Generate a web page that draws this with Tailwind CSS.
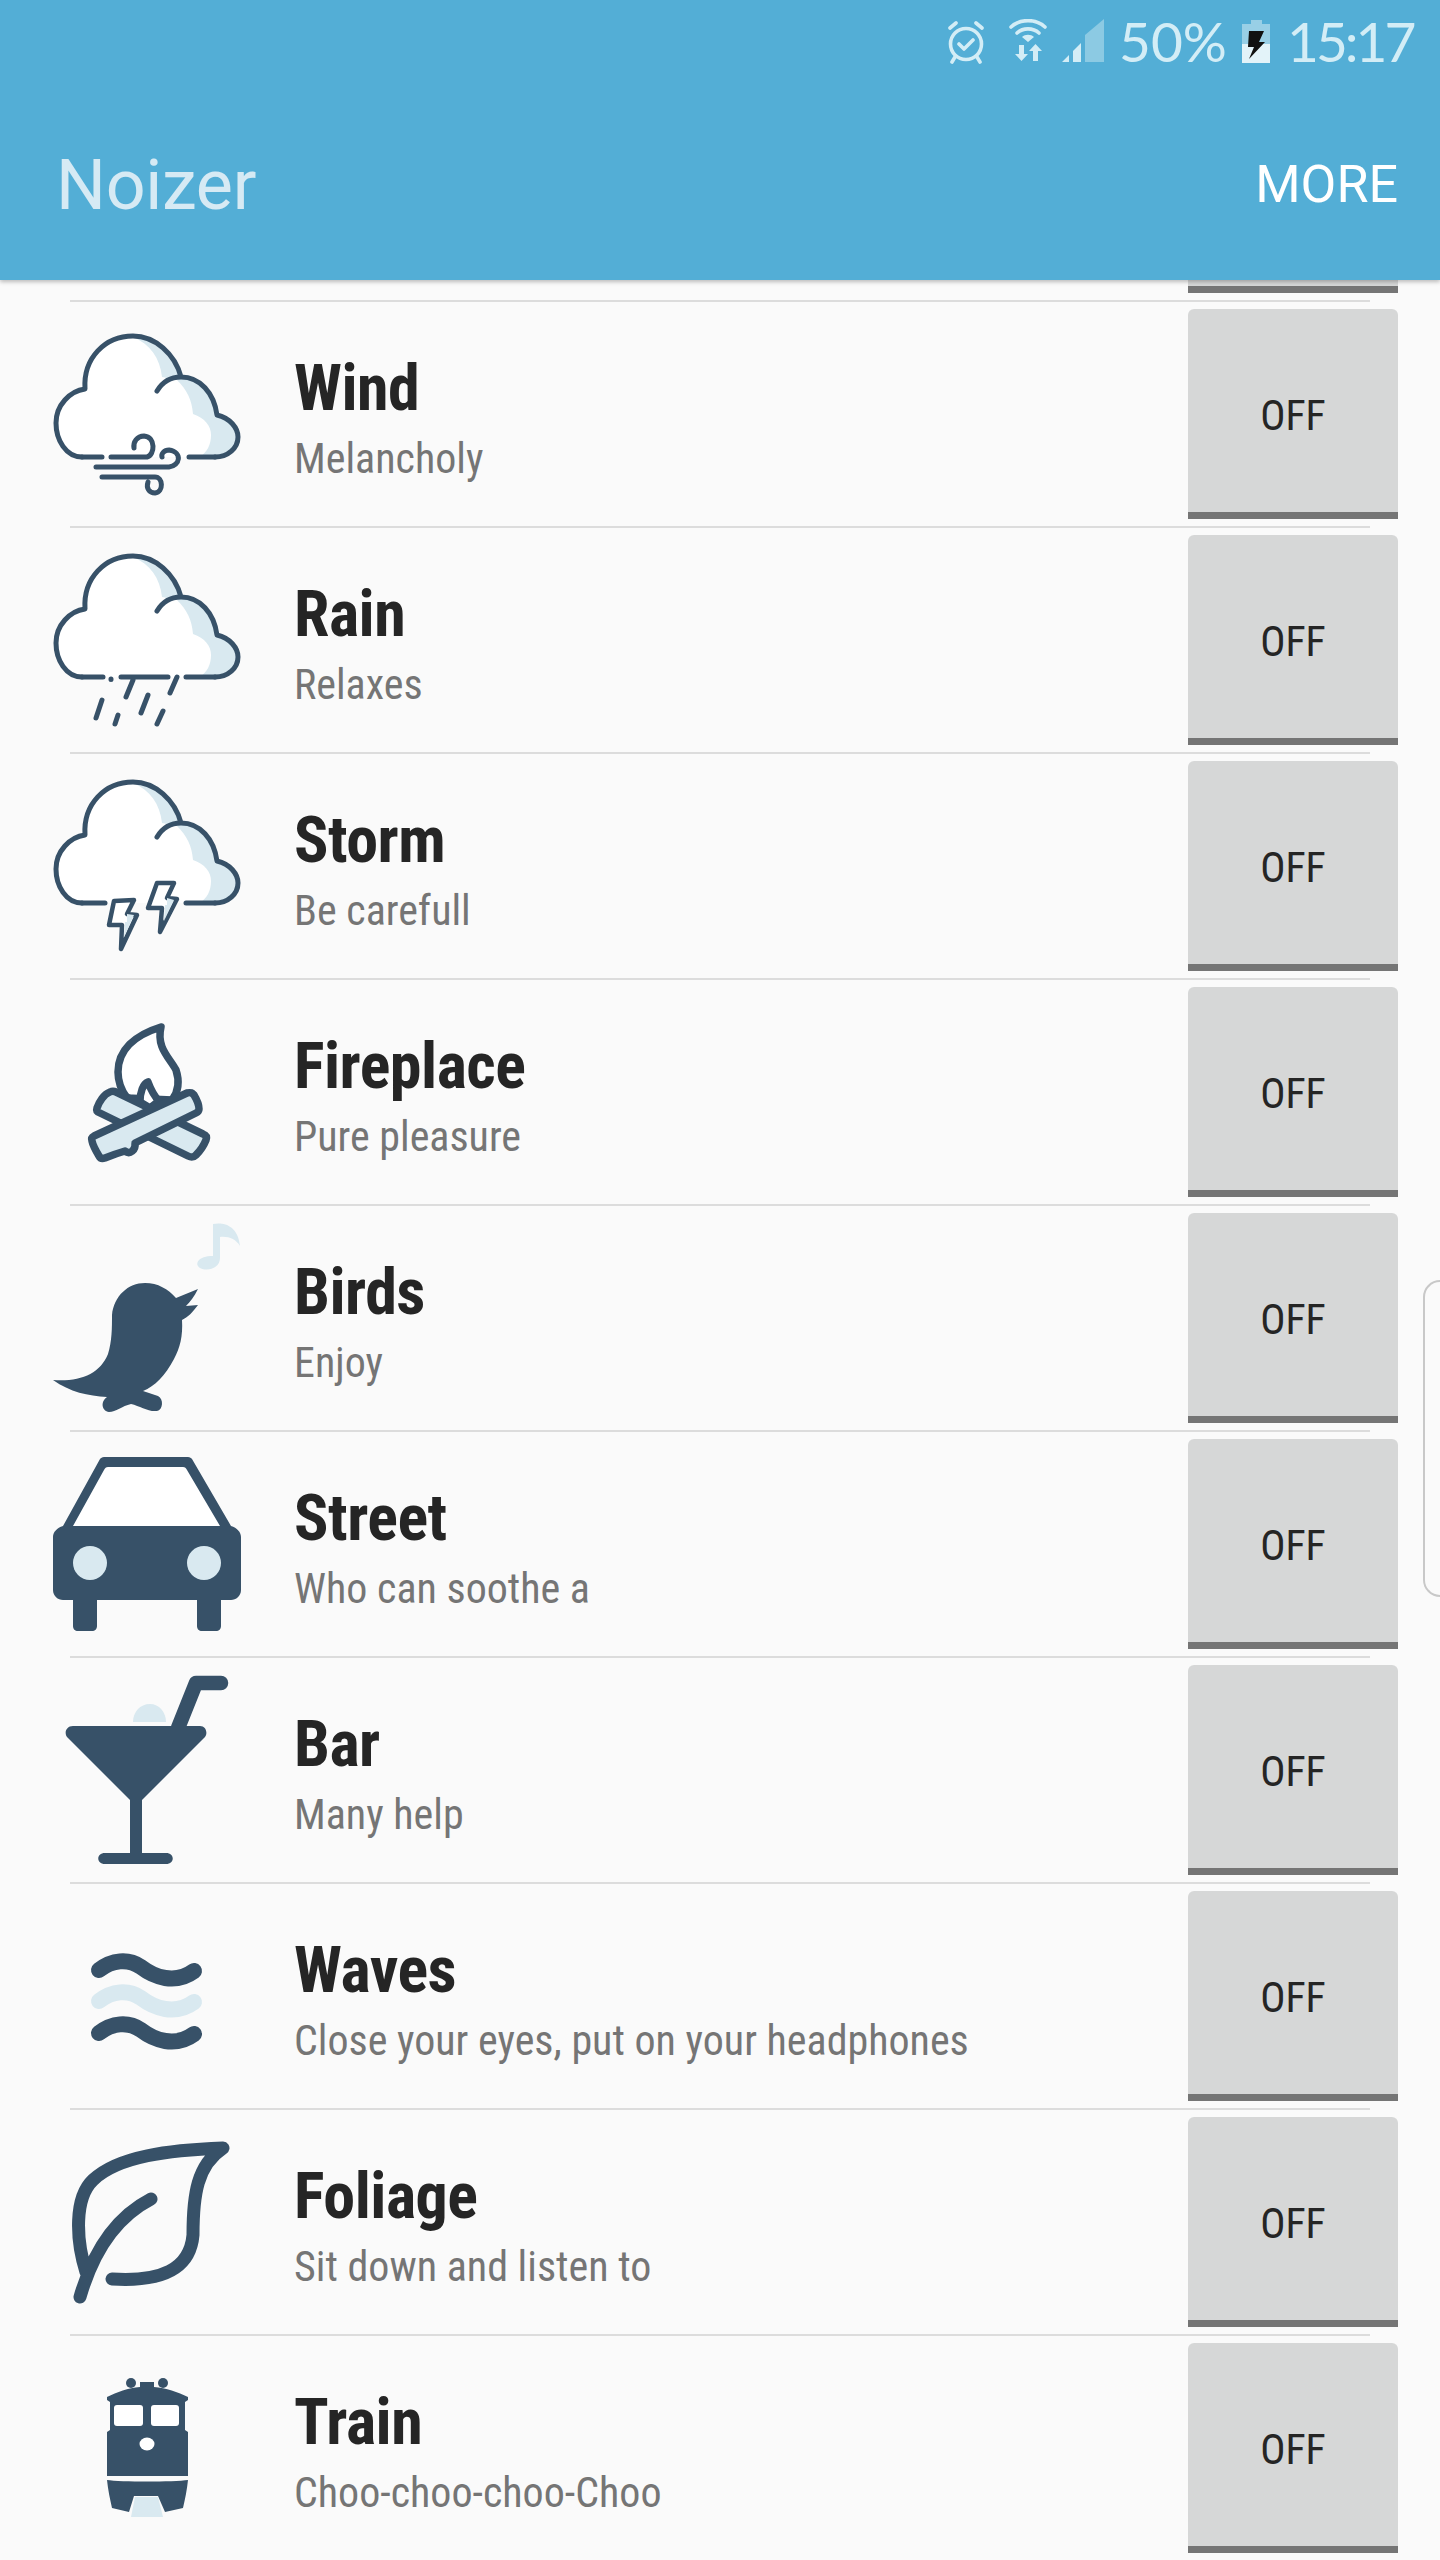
<!DOCTYPE html>
<html lang="en">
<head>
  <meta charset="UTF-8" />
  <title>Noizer</title>
  <script src="https://cdn.jsdelivr.net/npm/@tailwindcss/browser@4"></script>
</head>
<body class="relative h-[2560px] overflow-hidden bg-[#fafafa] font-[Roboto]">

<svg width="0" height="0" class="absolute">
  <defs>
    <!-- cloud without its bottom edge, bottom edges differ per icon -->
    <g id="cloud">
      <path fill="#d9e9f0" d="M82 149C66 149 56 132 56 115C56 97 70 83 85 81C83 50 105 28 133 28C155 28 175 46 181 69C200 69 214 85 217 107C230 110 238 120 238 129C238 140 228 149 215 149Z"/>
      <path fill="#fff" d="M82 149C66 149 56 132 56 115C56 97 70 83 85 81C83 50 105 28 133 29C150 36 160 50 162 69L177 72C187 82 192 92 193 106C205 110 211 118 211 127C211 137 207 144 200 149Z"/>
      <path fill="none" stroke="#375168" stroke-width="5" stroke-linecap="round" stroke-linejoin="round" d="M82 149C66 149 56 132 56 115C56 97 70 83 85 81C83 50 105 28 133 28C155 28 175 46 181 69M157 83C163 73 172 69 181 69C200 69 214 85 217 107C230 110 238 120 238 129C238 140 228 149 215 149"/>
    </g>
  </defs>
</svg>

<header class="relative z-10 h-[280px] bg-[#53aed6] shadow-[0_2px_4px_rgba(0,0,0,0.25)]">
  <div class="flex h-[88px] items-start justify-end pr-[29px] pt-[11px] font-[Lato] text-[55px] leading-[60px] text-[#d3edf6]">
    <svg width="38" height="44" viewBox="0 0 38 44" class="mt-[9px] mr-[24px]" fill="none" stroke="#d3edf6" stroke-width="3.6" stroke-linecap="round" stroke-linejoin="round">
      <circle cx="19" cy="24" r="15.500"/>
      <path d="M12 24l5 5 9-9M3 8l6-5M35 8l-6-5M8 37l-3 5M30 37l3 5"/>
    </svg>
    <svg width="38" height="44" viewBox="0 0 38 44" class="mt-[8px] mr-[15px]" fill="none" stroke="#d3edf6" stroke-linecap="round">
      <path stroke-width="3.6" d="M2 8C11 -0.5 27 -0.5 36 8M8 14C14 8.500 24 8.500 30 14"/>
      <path fill="#d3edf6" stroke="none" d="M19 23l-6-5c3-3 9-3 12 0zM10 26h5v9h4l-6.500 7-6.500-7h4zM24 42h5v-10h4l-6.500-7-6.500 7h4z"/>
    </svg>
    <svg width="43" height="44" viewBox="0 0 43 44" class="mt-[8px] mr-[14px]">
      <path fill="#8ccae3" d="M23 16L42 0V43H23z"/>
      <path fill="#d3edf6" d="M0 43L7 36V43zM11 32L19 24V43H11z"/>
    </svg>
    <span class="w-[109px] text-[55px] whitespace-nowrap">50%</span>
    <svg width="28" height="44" viewBox="0 0 28 44" class="mt-[9px] mr-[17px] ml-[14px]">
      <path fill="#98cfe6" d="M9 0H20V4H28V24H0V4H9z"/>
      <rect y="24" width="28" height="19" fill="#e3f3f9"/>
      <path fill="#111" d="M7 11H22L17 22H23L7 39L12 27H6z"/>
    </svg>
    <span class="w-[124px] tracking-[-3px] whitespace-nowrap">15:17</span>
  </div>
  <div class="flex h-[192px] items-center justify-between pt-[2px] pr-[42px] pl-[56px]">
    <span class="text-[70px] tracking-[-0.3px] text-[#d6eaf4]">Noizer</span>
    <span class="text-[52px] text-white">MORE</span>
  </div>
</header>

<main>
  <!-- previous row, scrolled under the header -->
  <div class="flex h-[13px] justify-end pr-[42px]">
    <div class="h-[13px] w-[210px] border-b-[7px] border-[#757575] bg-[#d6d7d7]"></div>
  </div>
  <div class="mt-[7px] ml-[70px] h-[2px] w-[1300px] bg-[#dcdcdc]"></div>

  <div class="flex h-[224px] items-center pr-[42px]">
    <svg width="200" height="224" viewBox="40 0 200 224" class="ml-[40px] shrink-0 overflow-visible">
      <g transform="translate(0 6)"><use href="#cloud"/></g>
      <path fill="none" stroke="#375168" stroke-width="5" stroke-linecap="round" d="M82 155H102M189 155H215M111 155H147C155 153 156 135 144 134C137 134 133 140 134 146M96 165H169C180 164 183 150 169 148C164 148 161 152 162 155M102 175H155C163 175 164 190 155 191C149 191 146 186 148 180"/>
    </svg>
    <div class="ml-[54px] flex-1 pt-[8px]">
      <div class="text-[64px] leading-[76px] font-bold tracking-[-0.5px] text-[#252525] [font-stretch:75%]">Wind</div>
      <div class="mt-[6px] text-[42px] leading-[52px] text-[#757575] [font-stretch:75%]">Melancholy</div>
    </div>
    <button class="flex h-[210px] w-[210px] items-center justify-center rounded-t-[6px] border-b-[7px] border-[#757575] bg-[#d6d7d7] pt-[10px] text-[42px] text-[#252525] [font-stretch:75%]">OFF</button>
  </div>
  <div class="ml-[70px] h-[2px] w-[1300px] bg-[#dcdcdc]"></div>

  <div class="flex h-[224px] items-center pr-[42px]">
    <svg width="200" height="224" viewBox="40 0 200 224" class="ml-[40px] shrink-0 overflow-visible">
      <use href="#cloud"/>
      <path fill="none" stroke="#375168" stroke-width="5" stroke-linecap="round" d="M82 149H103M111 151V151.500M121 149H168M186 149H215M133 152L126 169M177 149L170 165M102 172L96 190M148 167L141 185M118 187L115 196M163 183L157 196"/>
    </svg>
    <div class="ml-[54px] flex-1 pt-[8px]">
      <div class="text-[64px] leading-[76px] font-bold tracking-[-0.5px] text-[#252525] [font-stretch:75%]">Rain</div>
      <div class="mt-[6px] text-[42px] leading-[52px] text-[#757575] [font-stretch:75%]">Relaxes</div>
    </div>
    <button class="flex h-[210px] w-[210px] items-center justify-center rounded-t-[6px] border-b-[7px] border-[#757575] bg-[#d6d7d7] pt-[10px] text-[42px] text-[#252525] [font-stretch:75%]">OFF</button>
  </div>
  <div class="ml-[70px] h-[2px] w-[1300px] bg-[#dcdcdc]"></div>

  <div class="flex h-[224px] items-center pr-[42px]">
    <svg width="200" height="224" viewBox="40 0 200 224" class="ml-[40px] shrink-0 overflow-visible">
      <use href="#cloud"/>
      <path fill="none" stroke="#375168" stroke-width="5" stroke-linecap="round" d="M82 149H105M186 149H215"/>
      <path fill="#fff" stroke="#375168" stroke-width="4.5" stroke-linejoin="round" d="M114 147L134 146L127 160L137 161L121 195L122 171L109 171zM157 129L174 129L167 144L177 145L160 178L162 154L148 154z"/>
      <path fill="#d9e9f0" d="M127 160L134 161L124 183L125 168L127 168zM167 144L174 146L164 167L165 151L167 151z"/>
    </svg>
    <div class="ml-[54px] flex-1 pt-[8px]">
      <div class="text-[64px] leading-[76px] font-bold tracking-[-0.5px] text-[#252525] [font-stretch:75%]">Storm</div>
      <div class="mt-[6px] text-[42px] leading-[52px] text-[#757575] [font-stretch:75%]">Be carefull</div>
    </div>
    <button class="flex h-[210px] w-[210px] items-center justify-center rounded-t-[6px] border-b-[7px] border-[#757575] bg-[#d6d7d7] pt-[10px] text-[42px] text-[#252525] [font-stretch:75%]">OFF</button>
  </div>
  <div class="ml-[70px] h-[2px] w-[1300px] bg-[#dcdcdc]"></div>

  <div class="flex h-[224px] items-center pr-[42px]">
    <svg width="200" height="224" viewBox="40 0 200 224" class="ml-[40px] shrink-0 overflow-visible">
      <g stroke="#375168" stroke-width="7.500" stroke-linejoin="round" stroke-linecap="round">
        <path fill="#fff" d="M161 47C135 55 118 70 118 92C118 102 121 110 127 118L172 120C178 112 180 102 176 90C170 78 156 68 161 47z"/>
        <path fill="#fff" d="M140 122C140 112 143 104 148 102C151 110 154 116 159 121L150 128z"/>
        <path fill="#d9e9f0" d="M110 112C104 114 99 122 97 128C96 131 97 132 100 133L188 176C192 178 194 177 196 175C200 171 204 165 206 160C207 157 206 155 203 154L116 112C114 111 112 111 110 112z"/>
        <path fill="#d9e9f0" d="M187 113C191 112 192 113 194 115C197 120 199 125 199 129C199 131 198 132 196 133L135 163C136 170 130 175 125 171C118 173 110 176 105 178C102 179 100 178 99 176C96 171 93 166 92 161C91 158 92 157 94 156z"/>
      </g>
    </svg>
    <div class="ml-[54px] flex-1 pt-[8px]">
      <div class="text-[64px] leading-[76px] font-bold tracking-[-0.5px] text-[#252525] [font-stretch:75%]">Fireplace</div>
      <div class="mt-[6px] text-[42px] leading-[52px] text-[#757575] [font-stretch:75%]">Pure pleasure</div>
    </div>
    <button class="flex h-[210px] w-[210px] items-center justify-center rounded-t-[6px] border-b-[7px] border-[#757575] bg-[#d6d7d7] pt-[10px] text-[42px] text-[#252525] [font-stretch:75%]">OFF</button>
  </div>
  <div class="ml-[70px] h-[2px] w-[1300px] bg-[#dcdcdc]"></div>

  <div class="flex h-[224px] items-center pr-[42px]">
    <svg width="200" height="224" viewBox="40 0 200 224" class="ml-[40px] shrink-0 overflow-visible">
      <path fill="#375168" d="M53 174C80 176 100 168 108 148C112 135 112 122 112 109C114 90 128 77 145 77C158 77 168 83 176 92L198 83C194 91 190 96 186 100L198 99C192 107 188 111 182 114C183 130 180 142 174 153C165 170 155 180 143 185L158 190C164 193 163 204 157 205C148 206 140 200 131 198C122 200 116 206 109 206C102 205 100 196 107 191C88 190 70 186 53 174z"/>
      <path fill="#d9e9f0" d="M213 18C222 16 238 18 240 40C236 33 228 30 220 31V52C220 62 208 66 200 62C194 58 198 50 213 50z"/>
    </svg>
    <div class="ml-[54px] flex-1 pt-[8px]">
      <div class="text-[64px] leading-[76px] font-bold tracking-[-0.5px] text-[#252525] [font-stretch:75%]">Birds</div>
      <div class="mt-[6px] text-[42px] leading-[52px] text-[#757575] [font-stretch:75%]">Enjoy</div>
    </div>
    <button class="flex h-[210px] w-[210px] items-center justify-center rounded-t-[6px] border-b-[7px] border-[#757575] bg-[#d6d7d7] pt-[10px] text-[42px] text-[#252525] [font-stretch:75%]">OFF</button>
  </div>
  <div class="ml-[70px] h-[2px] w-[1300px] bg-[#dcdcdc]"></div>

  <div class="flex h-[224px] items-center pr-[42px]">
    <svg width="200" height="224" viewBox="40 0 200 224" class="ml-[40px] shrink-0 overflow-visible">
      <path fill="#375168" d="M104 25H188C190 25 191 26 192 27L231 94C237 96 241 100 241 105V158C241 164 236 168 231 168H221V194C221 197 219 199 216 199H202C199 199 197 197 197 194V168H97V194C97 197 95 199 92 199H78C75 199 73 197 73 194V168H63C58 168 53 164 53 158V105C53 100 57 96 63 94L100 27C101 26 102 25 104 25z"/>
      <path fill="#fff" d="M108 35H183C185 35 186 36 187 38L220 94H73L104 38C105 36 106 35 108 35z"/>
      <circle cx="90" cy="131" r="17" fill="#d9e9f0"/>
      <circle cx="204" cy="131" r="17" fill="#d9e9f0"/>
    </svg>
    <div class="ml-[54px] flex-1 pt-[8px]">
      <div class="text-[64px] leading-[76px] font-bold tracking-[-0.5px] text-[#252525] [font-stretch:75%]">Street</div>
      <div class="mt-[6px] text-[42px] leading-[52px] text-[#757575] [font-stretch:75%]">Who can soothe a</div>
    </div>
    <button class="flex h-[210px] w-[210px] items-center justify-center rounded-t-[6px] border-b-[7px] border-[#757575] bg-[#d6d7d7] pt-[10px] text-[42px] text-[#252525] [font-stretch:75%]">OFF</button>
  </div>
  <div class="ml-[70px] h-[2px] w-[1300px] bg-[#dcdcdc]"></div>

  <div class="flex h-[224px] items-center pr-[42px]">
    <svg width="200" height="224" viewBox="40 0 200 224" class="ml-[40px] shrink-0 overflow-visible">
      <path fill="#d9e9f0" d="M133 64C133 54 140 46 150 46C159 46 166 54 166 64z"/>
      <path fill="none" stroke="#375168" stroke-width="14.500" stroke-linecap="round" stroke-linejoin="round" d="M178 70L196 25H221"/>
      <path fill="#375168" d="M73 68H200C206 68 208 75 205 79L142 142V195H166C175 195 175 206 166 206H105C96 206 96 195 105 195H130V142L67 79C64 75 66 68 73 68z"/>
    </svg>
    <div class="ml-[54px] flex-1 pt-[8px]">
      <div class="text-[64px] leading-[76px] font-bold tracking-[-0.5px] text-[#252525] [font-stretch:75%]">Bar</div>
      <div class="mt-[6px] text-[42px] leading-[52px] text-[#757575] [font-stretch:75%]">Many help</div>
    </div>
    <button class="flex h-[210px] w-[210px] items-center justify-center rounded-t-[6px] border-b-[7px] border-[#757575] bg-[#d6d7d7] pt-[10px] text-[42px] text-[#252525] [font-stretch:75%]">OFF</button>
  </div>
  <div class="ml-[70px] h-[2px] w-[1300px] bg-[#dcdcdc]"></div>

  <div class="flex h-[224px] items-center pr-[42px]">
    <svg width="200" height="224" viewBox="40 0 200 224" class="ml-[40px] shrink-0 overflow-visible">
      <g fill="none" stroke-width="16" stroke-linecap="round">
        <path stroke="#d9e9f0" d="M99 117C112 107 128 105 141 114C154 124 175 132 194 118"/>
        <path stroke="#375168" d="M99 86C112 76 128 74 141 83C154 93 175 101 194 87"/>
        <path stroke="#375168" d="M99 149C112 139 128 137 141 146C154 156 175 164 194 150"/>
      </g>
    </svg>
    <div class="ml-[54px] flex-1 pt-[8px]">
      <div class="text-[64px] leading-[76px] font-bold tracking-[-0.5px] text-[#252525] [font-stretch:75%]">Waves</div>
      <div class="mt-[6px] text-[42px] leading-[52px] text-[#757575] [font-stretch:75%]">Close your eyes, put on your headphones</div>
    </div>
    <button class="flex h-[210px] w-[210px] items-center justify-center rounded-t-[6px] border-b-[7px] border-[#757575] bg-[#d6d7d7] pt-[10px] text-[42px] text-[#252525] [font-stretch:75%]">OFF</button>
  </div>
  <div class="ml-[70px] h-[2px] w-[1300px] bg-[#dcdcdc]"></div>

  <div class="flex h-[224px] items-center pr-[42px]">
    <svg width="200" height="224" viewBox="40 0 200 224" class="ml-[40px] shrink-0 overflow-visible">
      <path fill="none" stroke="#375168" stroke-width="13" stroke-linecap="round" stroke-linejoin="round" d="M112 169C160 172 190 160 193 125C193 85 197 55 223 38C170 40 118 46 93 70C74 88 76 130 86 162M151 89C120 105 95 135 80 187"/>
    </svg>
    <div class="ml-[54px] flex-1 pt-[8px]">
      <div class="text-[64px] leading-[76px] font-bold tracking-[-0.5px] text-[#252525] [font-stretch:75%]">Foliage</div>
      <div class="mt-[6px] text-[42px] leading-[52px] text-[#757575] [font-stretch:75%]">Sit down and listen to</div>
    </div>
    <button class="flex h-[210px] w-[210px] items-center justify-center rounded-t-[6px] border-b-[7px] border-[#757575] bg-[#d6d7d7] pt-[10px] text-[42px] text-[#252525] [font-stretch:75%]">OFF</button>
  </div>
  <div class="ml-[70px] h-[2px] w-[1300px] bg-[#dcdcdc]"></div>

  <div class="flex h-[224px] items-center pr-[42px]">
    <svg width="200" height="224" viewBox="40 0 200 224" class="ml-[40px] shrink-0 overflow-visible">
      <circle cx="131" cy="47" r="5" fill="#375168"/>
      <circle cx="163" cy="47" r="5" fill="#375168"/>
      <path fill="#375168" d="M140 46H154V51C166 52 178 56 188 61V64L185 66V94L188 96V140H107V96L110 94V66L107 64V61C117 56 128 52 140 51z"/>
      <path fill="#375168" d="M107 144C120 146 174 146 188 144C187 154 185 163 183 172L165 176L158 160H134L129 176L112 172C110 163 108 154 107 144z"/>
      <rect x="114" y="69" width="29" height="21" rx="3" fill="#fff"/>
      <rect x="151" y="69" width="28" height="21" rx="3" fill="#fff"/>
      <ellipse cx="147" cy="108" rx="7.500" ry="6.500" fill="#fff"/>
      <path fill="#d9e9f0" d="M135 161H158L163 181H131z"/>
    </svg>
    <div class="ml-[54px] flex-1 pt-[8px]">
      <div class="text-[64px] leading-[76px] font-bold tracking-[-0.5px] text-[#252525] [font-stretch:75%]">Train</div>
      <div class="mt-[6px] text-[42px] leading-[52px] text-[#757575] [font-stretch:75%]">Choo-choo-choo-Choo</div>
    </div>
    <button class="flex h-[210px] w-[210px] items-center justify-center rounded-t-[6px] border-b-[7px] border-[#757575] bg-[#d6d7d7] pt-[10px] text-[42px] text-[#252525] [font-stretch:75%]">OFF</button>
  </div>
</main>

<!-- edge panel handle -->
<div class="absolute top-[1280px] right-0 h-[317px] w-[17px] rounded-l-[30px] border-y-2 border-l-2 border-[#c8c8c8]"></div>

</body>
</html>
